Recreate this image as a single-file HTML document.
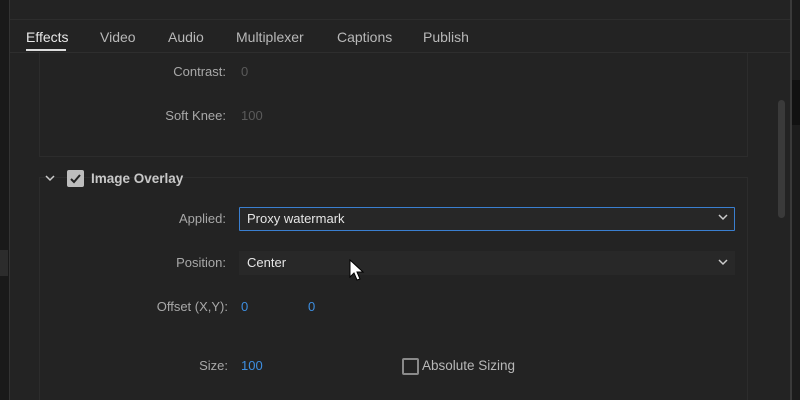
<!DOCTYPE html>
<html style="overflow:hidden;width:800px;height:400px;"><head><style>
html,body{margin:0;width:800px;height:400px;overflow:hidden;}
body{background:#1c1c1c;position:relative;font-family:"Liberation Sans",sans-serif;}
.a{position:absolute;}
.lbl{color:#a8a8a8;font-size:13px;text-align:right;width:120px;}
.val{color:#3d8ee0;font-size:13px;}
</style></head><body>
<div class="a" style="left:0;top:0;width:9px;height:400px;background:#191919"></div>
<div class="a" style="left:0;top:250px;width:8px;height:26px;background:#2c2c2c"></div>
<div class="a" style="left:9px;top:0;width:1px;height:400px;background:#333"></div>
<div class="a" style="left:10px;top:0;width:780px;height:400px;background:#232323"></div>
<div class="a" style="left:790px;top:0;width:2px;height:400px;background:#3a3a3a"></div>
<div class="a" style="left:792px;top:80px;width:8px;height:45px;background:#111"></div>
<div class="a" style="left:10px;top:19px;width:780px;height:1px;background:#2d2d2d"></div>
<div class="a" style="left:10px;top:52px;width:780px;height:1px;background:#2e2e2e"></div>
<div class="a" style="left:26px;top:29px;color:#e8e8e8;font-size:14px;">Effects</div>
<div class="a" style="left:26px;top:49px;width:40px;height:2px;background:#ddd"></div>
<div class="a" style="left:100px;top:29px;color:#b8b8b8;font-size:14px;">Video</div>
<div class="a" style="left:168px;top:29px;color:#b8b8b8;font-size:14px;">Audio</div>
<div class="a" style="left:236px;top:29px;color:#b8b8b8;font-size:14px;">Multiplexer</div>
<div class="a" style="left:337px;top:29px;color:#b8b8b8;font-size:14px;">Captions</div>
<div class="a" style="left:423px;top:29px;color:#b8b8b8;font-size:14px;">Publish</div>
<div class="a" style="left:39px;top:53px;width:707px;height:103px;border:1px solid #2c2c2c;border-top:none;"></div>
<div class="a lbl" style="left:106px;top:64px;">Contrast:</div>
<div class="a" style="left:241px;top:64px;color:#5a5a5a;font-size:13px;">0</div>
<div class="a lbl" style="left:106px;top:108px;">Soft Knee:</div>
<div class="a" style="left:241px;top:108px;color:#5a5a5a;font-size:13px;">100</div>
<div class="a" style="left:39px;top:177px;width:707px;height:230px;border:1px solid #2c2c2c;"></div>
<svg class="a" style="left:45px;top:174px" width="10" height="8"><path d="M1 2l4 4 4-4" stroke="#ccc" stroke-width="1.5" fill="none"/></svg>
<div class="a" style="left:67px;top:170px;width:17px;height:17px;background:#bdbdbd;border-radius:2px;"></div>
<svg class="a" style="left:67px;top:170px" width="17" height="17"><path d="M4 9l3 3 6-7" stroke="#222" stroke-width="2" fill="none"/></svg>
<div class="a" style="left:91px;top:171px;color:#c8c8c8;font-size:13.5px;font-weight:bold;">Image Overlay</div>
<div class="a lbl" style="left:106px;top:211px;">Applied:</div>
<div class="a" style="left:239px;top:207px;width:494px;height:22px;border:1px solid #3a7fd0;background:#272727;border-radius:1px;"></div>
<div class="a" style="left:247px;top:211px;color:#e6e6e6;font-size:13px;">Proxy watermark</div>
<div class="a lbl" style="left:106px;top:255px;">Position:</div>
<div class="a" style="left:239px;top:251px;width:496px;height:24px;background:#282828;"></div>
<div class="a" style="left:247px;top:255px;color:#e6e6e6;font-size:13px;">Center</div>
<svg class="a" style="left:718px;top:213px" width="10" height="8"><path d="M1 2l4 4 4-4" stroke="#ccc" stroke-width="1.5" fill="none"/></svg>
<svg class="a" style="left:718px;top:258px" width="10" height="8"><path d="M1 2l4 4 4-4" stroke="#ccc" stroke-width="1.5" fill="none"/></svg>
<svg class="a" style="left:349px;top:259px" width="16" height="22"><path d="M1 1v17l4-4 3 7 3-1-3-7h6z" fill="#fff" stroke="#000" stroke-width="1"/></svg>
<div class="a lbl" style="left:108px;top:299px;">Offset (X,Y):</div>
<div class="a val" style="left:241px;top:299px;">0</div>
<div class="a val" style="left:308px;top:299px;">0</div>
<div class="a lbl" style="left:108px;top:358px;">Size:</div>
<div class="a val" style="left:241px;top:358px;">100</div>
<div class="a" style="left:402px;top:358px;width:13px;height:13px;border:2px solid #8a8a8a;border-radius:2px;"></div>
<div class="a" style="left:422px;top:358px;color:#b8b8b8;font-size:13.5px;">Absolute Sizing</div>
<div class="a" style="left:778px;top:100px;width:7px;height:118px;background:#3a3a3a;border-radius:4px;"></div>
</body></html>
